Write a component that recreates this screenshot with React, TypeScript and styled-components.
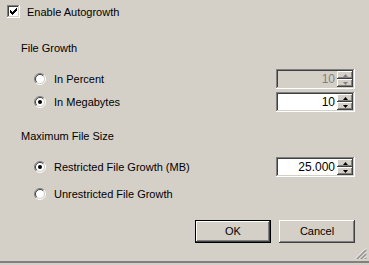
import styled, { createGlobalStyle } from "styled-components";

const Global = createGlobalStyle`
  html, body { margin: 0; padding: 0; }
  body {
    background: #d4d0c8;
    font-family: "Liberation Sans", Arial, sans-serif;
    font-size: 11px;
    color: #000;
  }
`;

const raised = `
  box-shadow: inset -1px -1px #404040, inset 1px 1px #ffffff,
    inset -2px -2px #808080, inset 2px 2px #d4d0c8;
`;

const sunken = `
  box-shadow: inset -1px -1px #ffffff, inset 1px 1px #808080,
    inset -2px -2px #d4d0c8, inset 2px 2px #404040;
`;

const Dialog = styled.div`
  height: 265px;
  display: flex;
  flex-direction: column;
  box-sizing: border-box;
`;

const CheckRow = styled.label`
  display: flex;
  align-items: center;
  height: 13px;
  margin: 5px 0 0 7px;
  gap: 7px;
`;

const CheckBox = styled.span`
  width: 13px;
  height: 13px;
  background: #fff;
  ${sunken}
  display: flex;
`;

const SectionLabel = styled.div<{ $top: number }>`
  height: 13px;
  line-height: 13px;
  margin: ${(p) => p.$top}px 0 0 21px;
`;

const OptionRow = styled.div<{ $top: number }>`
  display: flex;
  align-items: center;
  height: 20px;
  margin: ${(p) => p.$top}px 14px 0 34px;
`;

const OptionLabel = styled.span`
  margin-left: 8px;
  flex: 1;
`;

const SpinBox = styled.div<{ $disabled?: boolean }>`
  width: 79px;
  height: 20px;
  box-sizing: border-box;
  padding: 2px;
  display: flex;
  background: ${(p) => (p.$disabled ? "#d4d0c8" : "#fff")};
  ${sunken}
`;

const SpinValue = styled.span<{ $disabled?: boolean }>`
  flex: 1;
  text-align: right;
  padding-right: 2px;
  font-size: 12px;
  line-height: 16px;
  color: ${(p) => (p.$disabled ? "#808080" : "#000")};
`;

const SpinButtons = styled.div`
  width: 16px;
  display: flex;
  flex-direction: column;
`;

const SpinButton = styled.div`
  flex: 1;
  background: #d4d0c8;
  ${raised}
  display: flex;
  align-items: center;
  justify-content: center;
`;

const ButtonRow = styled.div`
  display: flex;
  justify-content: flex-end;
  gap: 8px;
  margin: 16px 14px 0 0;
`;

const Button = styled.button<{ $default?: boolean }>`
  width: 76px;
  height: 23px;
  padding: 0;
  border: none;
  background: #d4d0c8;
  font-family: inherit;
  font-size: 11px;
  color: #000;
  ${(p) =>
    p.$default
      ? `box-shadow: inset 0 0 0 1px #000, inset -2px -2px #404040, inset 2px 2px #ffffff,
    inset -3px -3px #808080, inset 3px 3px #d4d0c8;`
      : raised}
`;

const Footer = styled.div`
  margin-top: auto;
  height: 20px;
  display: flex;
  justify-content: flex-end;
  align-items: flex-end;
  border-bottom: 2px solid #808080;
  margin-bottom: 2px;
`;

const Grip = styled.svg`
  width: 12px;
  height: 12px;
  margin: 0 2px 1px 0;
`;

function Check() {
  const rows: [number, number, number][] = [
    [6, 0, 1],
    [5, 1, 2],
    [0, 2, 1],
    [4, 2, 3],
    [0, 3, 2],
    [3, 3, 3],
    [0, 4, 5],
    [1, 5, 3],
    [2, 6, 1],
  ];
  return (
    <svg width="13" height="13" viewBox="0 0 13 13">
      {rows.map(([x, y, w], i) => (
        <rect key={i} x={x + 3} y={y + 3} width={w} height={1} fill="#000" />
      ))}
    </svg>
  );
}

function Radio({ checked }: { checked?: boolean }) {
  return (
    <svg width="12" height="12" viewBox="0 0 12 12">
      <circle cx="6" cy="6" r="4.5" fill="#fff" />
      <path d="M2.1 9.9 A5.5 5.5 0 0 1 9.9 2.1" stroke="#808080" fill="none" />
      <path d="M9.9 2.1 A5.5 5.5 0 0 1 2.1 9.9" stroke="#ffffff" fill="none" />
      <path d="M2.8 9.2 A4.5 4.5 0 0 1 9.2 2.8" stroke="#404040" fill="none" />
      <path d="M9.2 2.8 A4.5 4.5 0 0 1 2.8 9.2" stroke="#d4d0c8" fill="none" />
      {checked && <circle cx="6" cy="6" r="2" fill="#000" />}
    </svg>
  );
}

function Arrow({ up, disabled }: { up?: boolean; disabled?: boolean }) {
  return (
    <svg width="5" height="3" viewBox="0 0 5 3">
      <polygon
        points={up ? "2.5,0 5,3 0,3" : "0,0 5,0 2.5,3"}
        fill={disabled ? "#808080" : "#000"}
      />
    </svg>
  );
}

function Spin({ value, disabled }: { value: string; disabled?: boolean }) {
  return (
    <SpinBox $disabled={disabled}>
      <SpinValue $disabled={disabled}>{value}</SpinValue>
      <SpinButtons>
        <SpinButton>
          <Arrow up disabled={disabled} />
        </SpinButton>
        <SpinButton>
          <Arrow disabled={disabled} />
        </SpinButton>
      </SpinButtons>
    </SpinBox>
  );
}

export default function App() {
  return (
    <>
      <Global />
      <Dialog>
        <CheckRow>
          <CheckBox>
            <Check />
          </CheckBox>
          Enable Autogrowth
        </CheckRow>

        <SectionLabel $top={24}>File Growth</SectionLabel>
        <OptionRow $top={14}>
          <Radio />
          <OptionLabel>In Percent</OptionLabel>
          <Spin value="10" disabled />
        </OptionRow>
        <OptionRow $top={3}>
          <Radio checked />
          <OptionLabel>In Megabytes</OptionLabel>
          <Spin value="10" />
        </OptionRow>

        <SectionLabel $top={18}>Maximum File Size</SectionLabel>
        <OptionRow $top={14}>
          <Radio checked />
          <OptionLabel>Restricted File Growth (MB)</OptionLabel>
          <Spin value="25.000" />
        </OptionRow>
        <OptionRow $top={8}>
          <Radio />
          <OptionLabel>Unrestricted File Growth</OptionLabel>
        </OptionRow>

        <ButtonRow>
          <Button $default>OK</Button>
          <Button>Cancel</Button>
        </ButtonRow>

        <Footer>
          <Grip viewBox="0 0 12 12">
            {[0, 4, 8].map((o) => (
              <g key={o}>
                <line x1={11} y1={o + 0.5} x2={o + 0.5} y2={11} stroke="#ffffff" />
                <line x1={11} y1={o + 1.5} x2={o + 1.5} y2={11} stroke="#808080" />
                <line x1={11} y1={o + 2.5} x2={o + 2.5} y2={11} stroke="#808080" />
              </g>
            ))}
          </Grip>
        </Footer>
      </Dialog>
    </>
  );
}
